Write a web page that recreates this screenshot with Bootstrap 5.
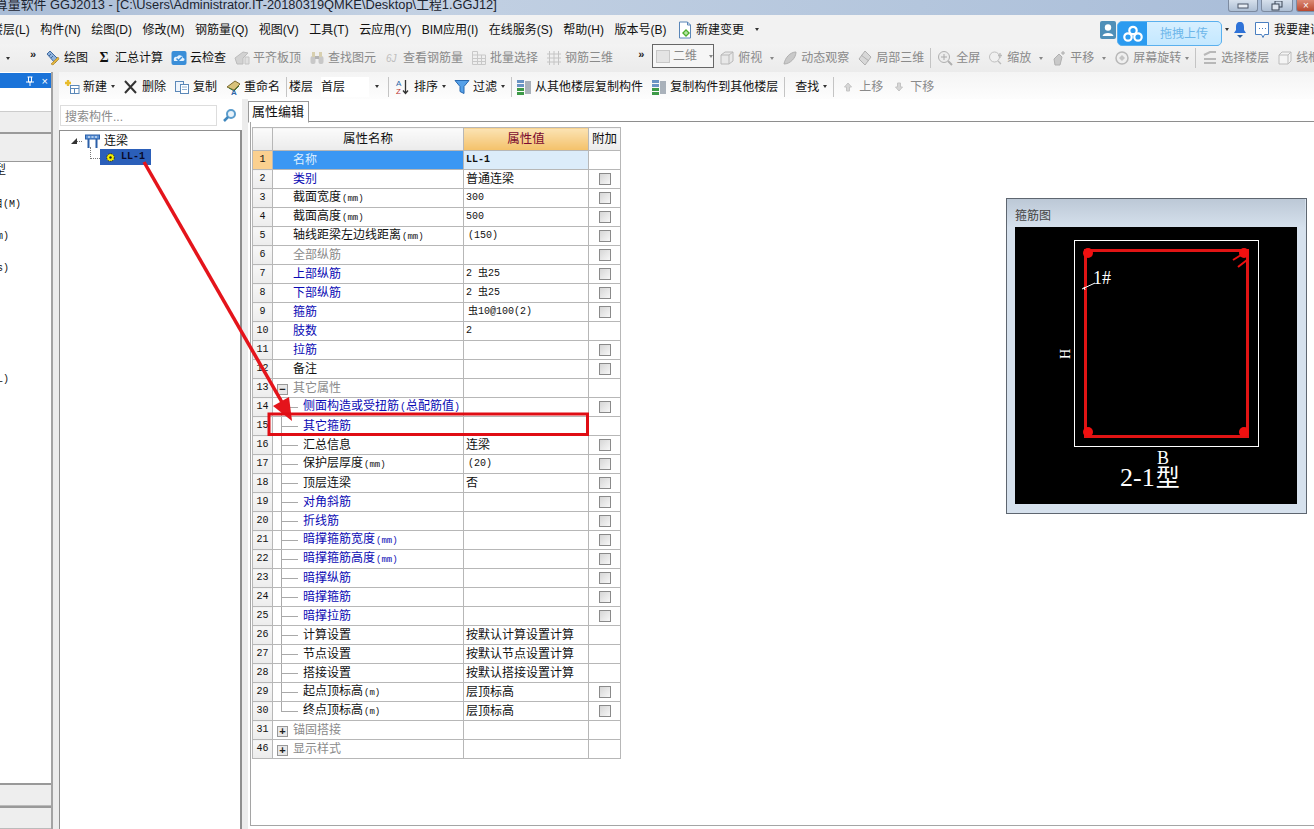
<!DOCTYPE html>
<html lang="zh-CN">
<head>
<meta charset="utf-8">
<title>GGJ2013</title>
<link rel="stylesheet" href="https://cdn.jsdelivr.net/npm/bootstrap@5.3.0/dist/css/bootstrap.min.css">
<style>
html,body{height:100%;overflow:hidden}
body{font-family:"Liberation Sans","Noto Sans CJK SC",sans-serif;font-size:12px;color:#111;background:#f0f0f0;line-height:16px}
.app-root{width:1314px;height:829px;position:relative;overflow:hidden}
.title-row{height:15px;flex:none;background:linear-gradient(90deg,#a9bcd6,#c3d1e3 30%,#b4c6dd 70%,#a8bcd8);overflow:hidden;color:#1c2430;font-size:12.85px;line-height:9px;white-space:nowrap}
.title-txt{margin-left:-5px}
.win-btn{height:12px;border:1px solid #7d8ba0;border-top:0;border-radius:0 0 3px 3px;background:linear-gradient(#d6e0ec,#aebfd4);margin-left:3px;display:flex;align-items:center;justify-content:center}
.wb-a{width:30px}.wb-b{width:32px}.wb-c{width:20px;background:linear-gradient(#dc8a76,#b9482f);margin-right:-2px;color:#fff;font-size:10px}
.menu-row{height:29px;flex:none;background:#f2f2f2;gap:10.5px;white-space:nowrap}
.menu-first{margin-left:-9px}
.tool-a{height:28px;flex:none;background:linear-gradient(#f3f3f3,#ebebeb);gap:8px;padding-left:6px;white-space:nowrap;overflow:hidden}
.tool-b{height:27px;flex:none;background:linear-gradient(#f4f4f4,#fdfdfd);gap:8px;padding:2px 0 0 5px;white-space:nowrap;overflow:hidden}
.ti{display:flex;align-items:center;gap:3px;flex:none}
.ti svg,.menu-row svg{flex:none;display:block}
.dim{color:#8a8a8a}
.caret-s{flex:none;width:0;height:0;border-top:3px solid #333;border-left:2.5px solid transparent;border-right:2.5px solid transparent}
.dim-c{border-top-color:#888}
.cl-4{margin-left:-4px}
.cl-2{margin-left:-2px}
.chev{flex:none;width:7px;font-size:11px;line-height:10px;font-weight:700;color:#222;margin-top:-8px;margin-left:12px}
.chev2{margin-left:17px}
.sig-g{flex:none;width:16px;text-align:center;font-family:"Liberation Serif",serif;font-weight:700;font-size:14px;line-height:16px}
.sepr{flex:none;width:1px;height:20px;background:#c4c4c4;margin:0 -2px}
.sep-far{margin-left:1px}
.pull-2{margin-left:-2px}
.combo-b{width:62px;height:24px;border:1px solid #666;background:#f6f6f6;margin:-4px -3px 0 -1px;display:flex;align-items:center;gap:3px;padding-left:3px;flex:none;color:#888}
.combo-b .caret-s{margin-left:9px}
.floor-box{width:48px;background:#fff;height:20px;line-height:20px;flex:none}
.side-l{width:53px;flex:none;border-right:2px solid #a3a3a3;background:#fff;overflow:hidden;display:flex;flex-direction:column}
.dock-title{height:15px;margin-top:1px;background:#1a73d9;color:#fff;display:flex;align-items:center;justify-content:flex-end;gap:8px;padding-right:3px;font-size:11px;flex:none}
.dock-a{height:24px;background:#fff;border-bottom:1px solid #ccc;flex:none}
.dock-b{height:22px;background:#eee;border-bottom:2px solid #9a9a9a;flex:none}
.dock-c{height:28px;background:#eee;border-bottom:1px solid #999;flex:none}
.dock-list{flex:1 1 auto;font-family:"Liberation Mono","Noto Sans CJK SC",monospace;font-size:10px}
.dock-ln{height:32px;line-height:18px;white-space:nowrap}
.dock-first{height:34px}
.dock-gap{height:79px}
.cut-a{margin-left:-6px;font-size:12px}.cut-b{margin-left:-7px}.cut-c{margin-left:-3px}
.dock-f{height:23px;background:#eee;border-top:2px solid #999;border-bottom:1px solid #bbb;flex:none}
.gutter-l{width:6px;flex:none;background:#ececec}
.right-wrap{flex:1 1 auto;min-width:0;display:flex;flex-direction:column}
.main-zone{height:757px}
.split-zone{flex:1 1 auto;min-height:0;background:#fff}
.mid-col{width:183px;flex:none;display:flex;flex-direction:column;background:#f7f7f7}
.search-row{height:31px;padding:6px 0 4px 1px;display:flex;flex:none;background:#fff}
.search-f{width:157px;height:21px;padding:3px 4px 0;font-size:12px;line-height:16px;color:#8a8a8a;border:1px solid #ddd;border-radius:0;background:#fff}
.search-g{margin:3px 0 0 5px}
.tree-box{flex:1 1 auto;background:#fff;border:1px solid #8f8f8f;border-right-width:2px;border-bottom:0;padding-top:2px;position:relative}
.tree-a{height:16px;display:flex;align-items:center;padding-left:11px}
.tree-tri{width:0;height:0;border-bottom:6px solid #333;border-left:6px solid transparent;margin-right:4px}
.tree-dots{width:5px;border-top:1px dotted #777;margin-left:-4px;margin-right:3px}
.tree-nm{margin-left:4px;font-size:12px}
.tree-b{height:16px;display:flex;margin-left:30px;align-items:center}
.tree-elbow{width:10px;border-left:1px dotted #777;border-bottom:1px dotted #777;margin-top:-8px;height:12px}
.tree-sel{width:51px;height:16px;background:#2b5fb9;display:flex;align-items:center;gap:5px;padding-left:5px;color:#0a0a2a;font-family:"Liberation Mono",monospace;font-size:10px;font-weight:700}
.gutter-m{width:6px;flex:none;background:#ececec}
.prop-col{flex:1 1 auto;min-width:0;display:flex;flex-direction:column;background:#fff}
.nav-tabs.tab-bar{height:23px;padding:2px 0 0 0;border-bottom:1px solid #8e8e8e;flex:none;flex-wrap:nowrap}
.nav-tabs.tab-bar .nav-link{height:22px;width:61px;padding:0 0 0 3px;font-size:13px;line-height:16px;color:#111;background:#fff;border:1px solid #9a9a9a;border-bottom-color:#fff;border-radius:0;margin:0;text-align:left}
.prop-body{flex:1 1 auto;min-height:0;border-left:1px solid #a5a5a5;border-bottom:1px solid #a5a5a5;margin-left:2px;margin-bottom:3px;padding:5px 0 0 1px;position:relative}
.table.prop-tbl{width:368px;table-layout:fixed;font-size:12px;--bs-border-color:#b7b7b7;--bs-table-bg:transparent;color:#111;margin:0}
.table.prop-tbl>*>*>*{padding:0;height:19px;line-height:14px;white-space:nowrap;overflow:hidden;vertical-align:middle;border-width:1px;border-color:#b7b7b7;box-shadow:none}
.table.prop-tbl thead th{height:23px;font-weight:400;text-align:center;background:linear-gradient(#fbfbfb,#ebebeb);font-size:12.5px}
.table.prop-tbl thead th.val-h{background:linear-gradient(#fbe3b4,#f4c169);color:#7a0a30}
.c-n{width:20px}.c-p{width:191px}.c-v{width:125px}.c-x{width:32px}
.prop-tbl td.nm{text-align:center;background:linear-gradient(#f7f7f7,#ececec);font-family:"Liberation Mono",monospace;font-size:10px;color:#111}
.prop-tbl td.nm-on{background:#fbd08f}
.prop-tbl td.pn{padding-left:20px}
.prop-tbl td.lf,.prop-tbl td.lf-e{padding-left:30px;background-repeat:no-repeat}
.prop-tbl td.lf{background-image:linear-gradient(#a9a9a9,#a9a9a9),linear-gradient(#a9a9a9,#a9a9a9);background-size:1px 100%,17px 1px;background-position:8px 0,8px 9px}
.prop-tbl td.lf-e{background-image:linear-gradient(#a9a9a9,#a9a9a9),linear-gradient(#a9a9a9,#a9a9a9);background-size:1px 10px,17px 1px;background-position:8px 0,8px 9px}
.prop-tbl td.gp{padding-left:4px}
.prop-tbl td.sel-n{background:#3b97f3;color:#dceeff}
.prop-tbl td.sel-v{background:#dcecfa;font-family:"Liberation Mono",monospace;font-size:10px;font-weight:700;padding-left:2px;color:#111}
.prop-tbl td.vl{padding-left:2px;color:#111}
.prop-tbl td.vi{padding-left:4px}
.mono-v{font-family:"Liberation Mono","Noto Sans CJK SC",monospace;font-size:10px}
.unit-x{font-family:"Liberation Mono","Noto Sans CJK SC",monospace;font-size:9px;margin-left:1px}
.unit-cn{font-size:10px}
.unit-cn b{font-weight:400;font-size:12px}
.prop-tbl td.blue-t{color:#0a0ab4}.prop-tbl td.gray-t{color:#8b8b8b}
.prop-tbl td.ck{text-align:center}
.chk-b{display:block;width:12px;height:12px;margin:0 auto;border:1px solid #8a8a8a;background:linear-gradient(135deg,#d6d6d6,#f7f7f7)}
.exp-b{display:inline-block;width:11px;height:11px;border:1px solid #999;background:#e8e8e8;vertical-align:-1px;margin-right:5px;line-height:8px;text-align:center;font-size:11px;font-weight:700;color:#222}
.stir-win{position:absolute;left:1006px;top:198px;width:301px;height:316px;border:1px solid #5e6670;background:#d6e1ed;padding:0 9px 8px 8px}
.stir-head{height:28px;margin:0 -8px;padding:9px 0 0 8px;background:linear-gradient(#bcc8d6,#d5e0ec);color:#444;line-height:16px}
.stir-svg{display:block}
.cloud-w{position:absolute;left:1117px;top:21px;width:105px;height:25px;border-radius:5px;background:#2b9bf0;border:1px solid #5ab0ee;display:flex;overflow:hidden}
.cloud-l{width:29px;display:flex;align-items:center;justify-content:center;flex:none}
.cloud-r{flex:1 1 auto;background:linear-gradient(#d6efff,#c4e8ff);color:#6cb6ea;text-align:center;line-height:25px;font-size:12px}
.overlay-x{position:absolute;left:0;top:0;pointer-events:none}
.mi-r{margin-right:-8px}
.m-a{margin-left:98.5px;margin-right:-6.5px}.m-b{margin-left:-3.5px}.m-c{margin-left:-6.5px}
.ti svg text{font-family:"Liberation Sans",sans-serif}
</style>
</head>
<body>
<div class="app-root d-flex flex-column">
  <div class="title-row d-flex align-items-start">
    <span class="title-txt">算量软件 GGJ2013 - [C:\Users\Administrator.IT-20180319QMKE\Desktop\工程1.GGJ12]</span>
    <div class="d-flex ms-auto">
      <div class="win-btn wb-a"><svg width="12" height="6"><rect x="1" y="1" width="10" height="4" fill="#e8eef5" stroke="#4a5566"/></svg></div>
      <div class="win-btn wb-b"><svg width="12" height="10"><rect x="4" y="0" width="7" height="6" fill="none" stroke="#3a4454"/><rect x="1" y="3" width="7" height="6" fill="#dfe6ef" stroke="#3a4454"/></svg></div>
      <div class="win-btn wb-c">×</div>
    </div>
  </div>

  <div class="menu-row d-flex align-items-center">
    <span class="menu-first">楼层(L)</span><span>构件(N)</span><span>绘图(D)</span><span>修改(M)</span><span>钢筋量(Q)</span><span>视图(V)</span><span>工具(T)</span><span>云应用(Y)</span><span>BIM应用(I)</span><span>在线服务(S)</span><span>帮助(H)</span><span>版本号(B)</span>
    <span class="ti"><svg width="16" height="18" viewBox="0 0 16 18"><path d="M2.500 1h8l3 3v13h-11z" fill="#fff" stroke="#5a86b8"/><path d="M10.500 1v3h3" fill="none" stroke="#5a86b8"/><path d="M9 8l4 4-4 4-4-4z" fill="#4caf2c"/><path d="M9 10v4M7 12h4" stroke="#d8f5c8"/></svg>新建变更</span>
    <span class="caret-s"></span>
    <svg class="ms-auto" width="16" height="18" viewBox="0 0 16 18"><rect width="16" height="18" rx="2" fill="#4f8fb8"/><circle cx="8" cy="6.500" r="3.200" fill="#fff"/><path d="M2.500 15c.5-4 10.500-4 11 0z" fill="#fff"/></svg>
    <span class="caret-s m-a"></span>
    <svg width="14" height="17" viewBox="0 0 14 17"><path d="M7 1c3 0 4 2 4 5v3l2 3H1l2-3V6c0-3 1-5 4-5z" fill="#2f73d8"/><path d="M4 14h6l-3 3z" fill="#2b5f9e"/></svg>
    <svg class="m-b" width="16" height="18" viewBox="0 0 16 18"><path d="M1.500 1.500h13v12h-4l-1.500 3-1.500-3h-6z" fill="#fff" stroke="#4a7fc0"/><path d="M5 7.500h1M8 7.500h1M11 7.500h1" stroke="#4a7fc0"/></svg>
    <span class="mi-r m-c">我要建议</span>
  </div>

  <div class="tool-a d-flex align-items-center">
    <span class="caret-s"></span><span class="chev">»</span>
    <span class="ti"><svg width="16" height="16" viewBox="0 0 16 16"><path d="M2 4l3-3 8 8-3 4z" fill="#8fb2dc" stroke="#3f6aa0"/><path d="M6 14l7-7 1 2-6 6z" fill="#e2b53e" stroke="#a87e1e" stroke-width=".6"/><path d="M4 6l2-2M6 8l2-2" stroke="#3f6aa0"/></svg>绘图</span>
    <span class="ti"><span class="sig-g">Σ</span>汇总计算</span>
    <span class="ti"><svg width="16" height="16" viewBox="0 0 16 16"><rect x="0.500" y="1" width="15" height="14" rx="2" fill="#3a8ed8"/><path d="M3 11c-1-3 1-5 3-4 1-3 6-2 6 1 2 0 2 3 0 3z" fill="#e4f2ff"/><path d="M5.500 8.500l2 2L11 7" fill="none" stroke="#3a8ed8" stroke-width="1.500"/></svg>云检查</span>
    <span class="ti dim"><svg width="16" height="16" viewBox="0 0 16 16"><path d="M1 8l8-6 5 1-5 5v6H3z" fill="#d2d2d2" stroke="#bcbcbc"/><path d="M11 7h4v7h-4z" fill="#e0e0e0" stroke="#c4c4c4"/></svg>平齐板顶</span>
    <span class="ti dim"><svg width="16" height="16" viewBox="0 0 16 16"><rect x="1.500" y="6" width="5" height="8" rx="2" fill="#c8c8c8"/><rect x="9.500" y="6" width="5" height="8" rx="2" fill="#c8c8c8"/><rect x="3" y="2" width="3" height="5" fill="#d8d0b0"/><rect x="10" y="2" width="3" height="5" fill="#d8d0b0"/><rect x="6" y="6" width="4" height="3" fill="#b4b4b4"/></svg>查找图元</span>
    <span class="ti dim"><svg width="16" height="16" viewBox="0 0 16 16"><text x="2" y="12" font-size="10" font-style="italic" fill="#bdbdbd">6J</text></svg>查看钢筋量</span>
    <span class="ti dim"><svg width="16" height="16" viewBox="0 0 16 16"><path d="M1.500 1.500h5v13h-5zM6.500 5h8v9.500h-8M1.500 5h5M1.500 8.500h13M1.500 11.500h13M10.500 5v9.500" fill="none" stroke="#c8c8c8"/></svg>批量选择</span>
    <span class="ti dim"><svg width="16" height="16" viewBox="0 0 16 16"><path d="M3.500 1v14M8 1v14M12.500 1v14M1 4h14M1 8h14M1 12h14" stroke="#c4c4c4"/></svg>钢筋三维</span>
    <span class="chev chev2">»</span>
    <div class="combo-b"><svg width="14" height="13" viewBox="0 0 14 13"><rect x="0.500" y="0.500" width="13" height="12" fill="#e4e4e4" stroke="#c8c8c8"/></svg>二维<span class="caret-s dim-c"></span></div>
    <span class="ti dim"><svg width="16" height="16" viewBox="0 0 16 16"><path d="M2 5l4-3h8v9l-4 3H2z" fill="#e8e8e8" stroke="#b8b8b8"/><path d="M2 5h8v9M10 5l4-3" fill="none" stroke="#b8b8b8"/></svg>俯视</span>
    <span class="caret-s dim-c"></span>
    <span class="ti dim"><svg width="16" height="16" viewBox="0 0 16 16"><path d="M2 14C3 8 8 2 14 2c0 6-6 12-12 12z" fill="#c9c9c9" stroke="#b0b0b0"/></svg>动态观察</span>
    <span class="ti dim"><svg width="16" height="16" viewBox="0 0 16 16"><path d="M8 1l6 6-6 8-6-6z" fill="#d8d8d8" stroke="#b0b0b0"/><path d="M4 5l8 6" stroke="#b0b0b0"/></svg>局部三维</span>
    <span class="sepr"></span>
    <span class="ti dim"><svg width="16" height="16" viewBox="0 0 16 16"><circle cx="7" cy="7" r="5.500" fill="#ececec" stroke="#b0b0b0"/><path d="M4 7h6M7 4v6" stroke="#aaa"/><path d="M11 11l4 4" stroke="#b0b0b0" stroke-width="2"/></svg>全屏</span>
    <span class="ti dim"><svg width="16" height="16" viewBox="0 0 16 16"><circle cx="6.500" cy="7" r="5" fill="#f0f0f0" stroke="#c0c0c0"/><path d="M10 11l3 3M12 3v5M10 5.500h4" stroke="#bbb" stroke-width="1.300"/></svg>缩放</span>
    <span class="caret-s dim-c"></span>
    <span class="ti dim"><svg width="16" height="16" viewBox="0 0 16 16"><path d="M3 9l5-5 3 3-2 8H4z" fill="#c9c9c9" stroke="#b0b0b0"/><path d="M12 1v4M10 3h4" stroke="#aaa"/></svg>平移</span>
    <span class="caret-s dim-c"></span>
    <span class="ti dim"><svg width="16" height="16" viewBox="0 0 16 16"><circle cx="8" cy="8" r="6" fill="#efefef" stroke="#b8b8b8" stroke-width="1.500"/><path d="M5 8l3-3 3 3-3 3z" fill="#c4c4c4"/></svg>屏幕旋转</span>
    <span class="caret-s dim-c cl-4"></span>
    <span class="sepr"></span>
    <span class="ti dim"><svg width="16" height="16" viewBox="0 0 16 16"><path d="M2 5l6-3h6M2 9h12M2 13h12" fill="none" stroke="#b8b8b8" stroke-width="2"/></svg>选择楼层</span>
    <span class="ti dim"><svg width="16" height="16" viewBox="0 0 16 16"><path d="M2 5l3-3h9v9l-3 3H2zM2 5h9v9M11 5l3-3" fill="#f4f4f4" stroke="#bcbcbc"/></svg>线框</span>
  </div>

  <div class="main-zone d-flex">
    <div class="side-l">
      <div class="dock-title"><svg width="8" height="10" viewBox="0 0 8 10"><path d="M1.500 1h5M2.500 1v5h3V1M0 6h8M4 6v4" fill="none" stroke="#fff"/></svg><span>×</span></div>
      <div class="dock-a"></div>
      <div class="dock-b"></div>
      <div class="dock-c"></div>
      <div class="dock-list">
        <div class="dock-ln dock-first"><span class="cut-a">型</span></div>
        <div class="dock-ln"><span class="cut-b">目(M)</span></div>
        <div class="dock-ln"><span class="cut-c">m)</span></div>
        <div class="dock-ln"><span class="cut-c">s)</span></div>
        <div class="dock-gap"></div>
        <div class="dock-ln"><span class="cut-c">L)</span></div>
      </div>
      <div class="dock-f"></div>
      <div class="dock-f"></div>
    </div>
    <div class="gutter-l"></div>
    <div class="right-wrap">
      <div class="tool-b d-flex align-items-center">
        <span class="ti"><svg width="16" height="16" viewBox="0 0 16 16"><rect x="6.500" y="6.500" width="8.500" height="8" fill="#fff" stroke="#5b88b8"/><path d="M6.500 9.500h8.500M10.500 9.500v5" stroke="#5b88b8"/><path d="M4 1v6M1 4h6" stroke="#e8bc2c" stroke-width="2.400"/></svg>新建</span>
        <span class="caret-s cl-4"></span>
        <span class="ti"><svg width="16" height="16" viewBox="0 0 16 16"><path d="M2 2l11 12M13 2L2 14" stroke="#333" stroke-width="2"/></svg>删除</span>
        <span class="ti"><svg width="16" height="16" viewBox="0 0 16 16"><rect x="1.500" y="2.500" width="8" height="10" fill="#eef4fb" stroke="#5b88b8"/><rect x="6.500" y="5.500" width="8" height="9" fill="#fff" stroke="#5b88b8"/><path d="M8 8h5M8 10.500h5" stroke="#8fb0d0"/></svg>复制</span>
        <span class="ti"><svg width="16" height="16" viewBox="0 0 16 16"><path d="M2 8l8-6 5 3-6 6z" fill="#d8c27a" stroke="#7a6a30"/><path d="M4 9l5 3 5-5" fill="none" stroke="#3f7a3a"/><text x="6" y="15.500" font-size="8" font-weight="700" fill="#2d66a8">A</text></svg>重命名</span>
        <span class="sepr"></span>
        <span class="cl-4">楼层</span>
        <span class="floor-box">首层</span>
        <span class="caret-s cl-2"></span>
        <span class="sepr sep-far"></span>
        <span class="ti"><svg width="16" height="16" viewBox="0 0 16 16"><text x="1" y="7" font-size="8" fill="#2d66a8">A</text><text x="1" y="15" font-size="8" fill="#b33">Z</text><path d="M10.500 1v13M8 11.500l2.500 3 2.500-3" fill="none" stroke="#333" stroke-width="1.300"/></svg>排序</span>
        <span class="caret-s cl-4"></span>
        <span class="ti"><svg width="16" height="16" viewBox="0 0 16 16"><path d="M1 1.500h14l-5 6v7l-4-2v-5z" fill="#55a0e8" stroke="#2768b0"/></svg>过滤</span>
        <span class="caret-s cl-4"></span>
        <span class="sepr"></span>
        <span class="ti pull-2"><svg width="16" height="16" viewBox="0 0 16 16"><rect x="1" y="1" width="7" height="3" fill="#6a94c4"/><rect x="1" y="5" width="7" height="3" fill="#6a94c4"/><rect x="1" y="9" width="7" height="3" fill="#3d9a48"/><rect x="1" y="13" width="7" height="3" fill="#3d9a48"/><path d="M10 2v13M12 2v13M14 2v13" stroke="#5b6a7c"/></svg>从其他楼层复制构件</span>
        <span class="ti"><svg width="16" height="16" viewBox="0 0 16 16"><rect x="1" y="1" width="7" height="3" fill="#6a94c4"/><rect x="1" y="5" width="7" height="3" fill="#6a94c4"/><rect x="1" y="9" width="7" height="3" fill="#3d9a48"/><rect x="1" y="13" width="7" height="3" fill="#3d9a48"/><path d="M10 2v13M12 2v13M14 2v13" stroke="#5b6a7c"/></svg>复制构件到其他楼层</span>
        <span class="sepr"></span>
        <span class="ms-1">查找</span>
        <span class="caret-s cl-4"></span>
        <span class="sepr"></span>
        <span class="ti dim"><svg width="16" height="16" viewBox="0 0 16 16"><path d="M8 4l3.500 4H9.500v4h-3V8H4.500z" fill="#d6d6d6" stroke="#c4c4c4"/></svg>上移</span>
        <span class="ti dim"><svg width="16" height="16" viewBox="0 0 16 16"><path d="M8 12l3.500-4H9.500V4h-3v4H4.500z" fill="#d6d6d6" stroke="#c4c4c4"/></svg>下移</span>
      </div>
      <div class="split-zone d-flex">
        <div class="mid-col">
          <div class="search-row">
            <div class="search-f">搜索构件...</div>
            <svg class="search-g" width="15" height="15" viewBox="0 0 15 15"><circle cx="9" cy="6" r="4" fill="#e8f3fb" stroke="#5a9ccc" stroke-width="2"/><path d="M6 9l-4 4" stroke="#3f87bd" stroke-width="2.500"/></svg>
          </div>
          <div class="tree-box">
            <div class="tree-a"><span class="tree-tri"></span><span class="tree-dots"></span><svg width="15" height="15" viewBox="0 0 15 15"><rect x="0.500" y="1" width="14" height="4" fill="#5d93d6" stroke="#2a5fa8"/><path d="M3.500 5v9M11.500 5v9" stroke="#2a5fa8" stroke-width="2"/><path d="M3 3h2M6.500 3h2M10 3h2" stroke="#fff"/></svg><span class="tree-nm">连梁</span></div>
            <div class="tree-b"><span class="tree-elbow"></span><div class="tree-sel"><svg width="11" height="11" viewBox="0 0 11 11"><circle cx="5.500" cy="5.500" r="3.800" fill="#f5f000" stroke="#222" stroke-dasharray="1.500 1"/><circle cx="5.500" cy="5.500" r="1.200" fill="#222"/></svg>LL-1</div></div>
          </div>
        </div>
        <div class="gutter-m"></div>
        <div class="prop-col">
          <ul class="nav nav-tabs tab-bar"><li class="nav-item"><button type="button" class="nav-link active">属性编辑</button></li></ul>
          <div class="prop-body">
            <table class="table table-bordered prop-tbl">
              <colgroup><col class="c-n"><col class="c-p"><col class="c-v"><col class="c-x"></colgroup>
              <thead><tr><th></th><th>属性名称</th><th class="val-h">属性值</th><th>附加</th></tr></thead>
              <tbody>
                <tr><td class="nm nm-on">1</td><td class="pn sel-n">名称</td><td class="sel-v">LL-1</td><td></td></tr>
                <tr><td class="nm">2</td><td class="pn blue-t">类别</td><td class="vl">普通连梁</td><td class="ck"><i class="chk-b"></i></td></tr>
                <tr><td class="nm">3</td><td class="pn">截面宽度<span class="unit-x">(mm)</span></td><td class="vl mono-v">300</td><td class="ck"><i class="chk-b"></i></td></tr>
                <tr><td class="nm">4</td><td class="pn">截面高度<span class="unit-x">(mm)</span></td><td class="vl mono-v">500</td><td class="ck"><i class="chk-b"></i></td></tr>
                <tr><td class="nm">5</td><td class="pn">轴线距梁左边线距离<span class="unit-x">(mm)</span></td><td class="vl vi mono-v">(150)</td><td class="ck"><i class="chk-b"></i></td></tr>
                <tr><td class="nm">6</td><td class="pn gray-t">全部纵筋</td><td></td><td class="ck"><i class="chk-b"></i></td></tr>
                <tr><td class="nm">7</td><td class="pn blue-t">上部纵筋</td><td class="vl mono-v">2 虫25</td><td class="ck"><i class="chk-b"></i></td></tr>
                <tr><td class="nm">8</td><td class="pn blue-t">下部纵筋</td><td class="vl mono-v">2 虫25</td><td class="ck"><i class="chk-b"></i></td></tr>
                <tr><td class="nm">9</td><td class="pn blue-t">箍筋</td><td class="vl vi mono-v">虫10@100(2)</td><td class="ck"><i class="chk-b"></i></td></tr>
                <tr><td class="nm">10</td><td class="pn blue-t">肢数</td><td class="vl mono-v">2</td><td></td></tr>
                <tr><td class="nm">11</td><td class="pn blue-t">拉筋</td><td></td><td class="ck"><i class="chk-b"></i></td></tr>
                <tr><td class="nm">12</td><td class="pn">备注</td><td></td><td class="ck"><i class="chk-b"></i></td></tr>
                <tr><td class="nm">13</td><td class="gp gray-t"><span class="exp-b">−</span>其它属性</td><td></td><td></td></tr>
                <tr><td class="nm">14</td><td class="lf blue-t">侧面构造或受扭筋<span class="unit-x unit-cn">(<b>总配筋值</b>)</span></td><td></td><td class="ck"><i class="chk-b"></i></td></tr>
                <tr><td class="nm">15</td><td class="lf blue-t">其它箍筋</td><td></td><td></td></tr>
                <tr><td class="nm">16</td><td class="lf">汇总信息</td><td class="vl">连梁</td><td class="ck"><i class="chk-b"></i></td></tr>
                <tr><td class="nm">17</td><td class="lf">保护层厚度<span class="unit-x">(mm)</span></td><td class="vl vi mono-v">(20)</td><td class="ck"><i class="chk-b"></i></td></tr>
                <tr><td class="nm">18</td><td class="lf">顶层连梁</td><td class="vl">否</td><td class="ck"><i class="chk-b"></i></td></tr>
                <tr><td class="nm">19</td><td class="lf blue-t">对角斜筋</td><td></td><td class="ck"><i class="chk-b"></i></td></tr>
                <tr><td class="nm">20</td><td class="lf blue-t">折线筋</td><td></td><td class="ck"><i class="chk-b"></i></td></tr>
                <tr><td class="nm">21</td><td class="lf blue-t">暗撑箍筋宽度<span class="unit-x">(mm)</span></td><td></td><td class="ck"><i class="chk-b"></i></td></tr>
                <tr><td class="nm">22</td><td class="lf blue-t">暗撑箍筋高度<span class="unit-x">(mm)</span></td><td></td><td class="ck"><i class="chk-b"></i></td></tr>
                <tr><td class="nm">23</td><td class="lf blue-t">暗撑纵筋</td><td></td><td class="ck"><i class="chk-b"></i></td></tr>
                <tr><td class="nm">24</td><td class="lf blue-t">暗撑箍筋</td><td></td><td class="ck"><i class="chk-b"></i></td></tr>
                <tr><td class="nm">25</td><td class="lf blue-t">暗撑拉筋</td><td></td><td class="ck"><i class="chk-b"></i></td></tr>
                <tr><td class="nm">26</td><td class="lf">计算设置</td><td class="vl">按默认计算设置计算</td><td></td></tr>
                <tr><td class="nm">27</td><td class="lf">节点设置</td><td class="vl">按默认节点设置计算</td><td></td></tr>
                <tr><td class="nm">28</td><td class="lf">搭接设置</td><td class="vl">按默认搭接设置计算</td><td></td></tr>
                <tr><td class="nm">29</td><td class="lf">起点顶标高<span class="unit-x">(m)</span></td><td class="vl">层顶标高</td><td class="ck"><i class="chk-b"></i></td></tr>
                <tr><td class="nm">30</td><td class="lf-e">终点顶标高<span class="unit-x">(m)</span></td><td class="vl">层顶标高</td><td class="ck"><i class="chk-b"></i></td></tr>
                <tr><td class="nm">31</td><td class="gp gray-t"><span class="exp-b">+</span>锚固搭接</td><td></td><td></td></tr>
                <tr><td class="nm">46</td><td class="gp gray-t"><span class="exp-b">+</span>显示样式</td><td></td><td></td></tr>
              </tbody>
            </table>
          </div>
        </div>
      </div>
    </div>
  </div>

  <div class="stir-win">
    <div class="stir-head">箍筋图</div>
    <svg class="stir-svg" width="282" height="277" viewBox="0 0 282 277">
      <rect width="282" height="277" fill="#000"/>
      <rect x="59.500" y="13.500" width="184" height="206" fill="none" stroke="#fff"/>
      <rect x="70.500" y="23.500" width="162" height="186" fill="none" stroke="#e01414" stroke-width="3"/>
      <circle cx="73" cy="26" r="5" fill="#f01010"/><circle cx="229" cy="26" r="5" fill="#f01010"/><circle cx="73" cy="205" r="5" fill="#f01010"/><circle cx="229" cy="205" r="5" fill="#f01010"/>
      <path d="M218 33l8-5M223 40l9-7" stroke="#f01010" stroke-width="2"/>
      <path d="M67 62l13-6M69 60l1 3" stroke="#fff"/>
      <text x="78" y="57" fill="#fff" font-family="Liberation Serif" font-size="18">1#</text>
      <text transform="translate(55 132) rotate(-90)" fill="#fff" font-family="Liberation Serif" font-size="14">H</text>
      <text x="142" y="237" fill="#fff" font-family="Liberation Serif" font-size="18">B</text>
      <text x="105" y="259" fill="#fff" font-family="Liberation Serif,Noto Sans CJK SC,serif" font-size="26">2-1<tspan font-size="24" dx="1">型</tspan></text>
    </svg>
  </div>

  <div class="cloud-w">
    <div class="cloud-l"><svg width="20" height="18" viewBox="0 0 20 18"><circle cx="10" cy="5.500" r="3.700" fill="none" stroke="#fff" stroke-width="2.200"/><circle cx="5" cy="12" r="3.700" fill="none" stroke="#fff" stroke-width="2.200"/><circle cx="15" cy="12" r="3.700" fill="none" stroke="#fff" stroke-width="2.200"/></svg></div>
    <div class="cloud-r">拖拽上传</div>
  </div>

  <svg class="overlay-x" width="1314" height="829" viewBox="0 0 1314 829">
    <path d="M144 162L283 404" stroke="#e4141b" stroke-width="3.500" fill="none"/>
    <path d="M292 421L273 406L289 397z" fill="#e4141b"/>
    <rect x="269" y="414" width="318.500" height="20.500" fill="none" stroke="#e00d14" stroke-width="3"/>
  </svg>
</div>
</body>
</html>
